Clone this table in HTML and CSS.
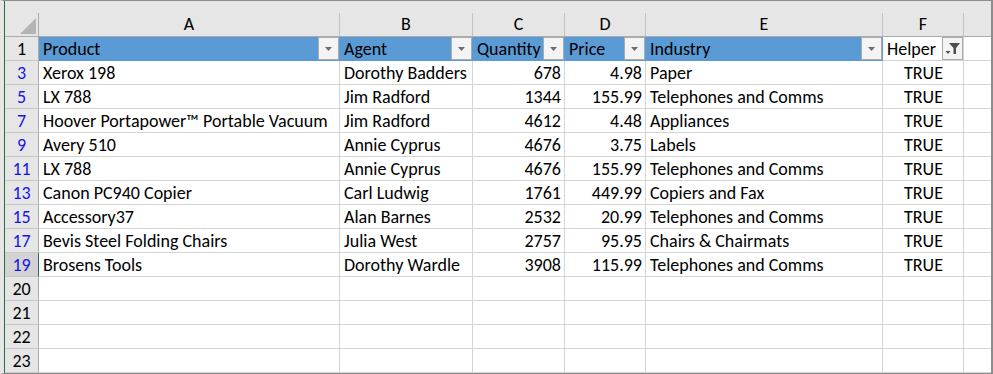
FILE: index.html
```html
<!DOCTYPE html>
<html lang="en">
<head>
    <meta charset="UTF-8">
    <title>Products - filtered</title>
    <link rel="stylesheet" href="styles.css">
</head>
<body>
    <div class="window">
        <div class="sheet">
            <div class="head-strip"></div>
            <div class="grid">
                <!-- column letters -->
                <div class="corner">
                    <svg width="16" height="16" viewBox="0 0 16 16"><polygon points="16,0 16,16 0,16" fill="#b4b4b4"/></svg>
                </div>
                <div class="ch">A</div>
                <div class="ch">B</div>
                <div class="ch">C</div>
                <div class="ch">D</div>
                <div class="ch">E</div>
                <div class="ch">F</div>
                <div class="ch last"></div>

                <!-- table header -->
                <div class="rh">1</div>
                <div class="c th">Product<span class="flt"><svg width="7" height="4"><polygon points="0,0 7,0 3.5,4" fill="#6d6d6d"/></svg></span></div>
                <div class="c th">Agent<span class="flt"><svg width="7" height="4"><polygon points="0,0 7,0 3.5,4" fill="#6d6d6d"/></svg></span></div>
                <div class="c th">Quantity<span class="flt"><svg width="7" height="4"><polygon points="0,0 7,0 3.5,4" fill="#6d6d6d"/></svg></span></div>
                <div class="c th">Price<span class="flt"><svg width="7" height="4"><polygon points="0,0 7,0 3.5,4" fill="#6d6d6d"/></svg></span></div>
                <div class="c th">Industry<span class="flt"><svg width="7" height="4"><polygon points="0,0 7,0 3.5,4" fill="#6d6d6d"/></svg></span></div>
                <div class="c th plain">Helper<span class="flt"><svg width="15" height="13" viewBox="0 0 15 13"><polygon points="4,1 15,1 11,6 11,12 8.5,12 8.5,6" fill="#4d4d4d"/><polygon points="0.5,9 5.5,9 3,12" fill="#4d4d4d"/></svg></span></div>
                <div class="c last"></div>

                <div class="rh hit">3</div>
                <div class="c">Xerox 198</div>
                <div class="c">Dorothy Badders</div>
                <div class="c num">678</div>
                <div class="c num">4.98</div>
                <div class="c">Paper</div>
                <div class="c ctr">TRUE</div>
                <div class="c last"></div>

                <div class="rh hit">5</div>
                <div class="c">LX 788</div>
                <div class="c">Jim Radford</div>
                <div class="c num">1344</div>
                <div class="c num">155.99</div>
                <div class="c">Telephones and Comms</div>
                <div class="c ctr">TRUE</div>
                <div class="c last"></div>

                <div class="rh hit">7</div>
                <div class="c">Hoover Portapower™ Portable Vacuum</div>
                <div class="c">Jim Radford</div>
                <div class="c num">4612</div>
                <div class="c num">4.48</div>
                <div class="c">Appliances</div>
                <div class="c ctr">TRUE</div>
                <div class="c last"></div>

                <div class="rh hit">9</div>
                <div class="c">Avery 510</div>
                <div class="c">Annie Cyprus</div>
                <div class="c num">4676</div>
                <div class="c num">3.75</div>
                <div class="c">Labels</div>
                <div class="c ctr">TRUE</div>
                <div class="c last"></div>

                <div class="rh hit">11</div>
                <div class="c">LX 788</div>
                <div class="c">Annie Cyprus</div>
                <div class="c num">4676</div>
                <div class="c num">155.99</div>
                <div class="c">Telephones and Comms</div>
                <div class="c ctr">TRUE</div>
                <div class="c last"></div>

                <div class="rh hit">13</div>
                <div class="c">Canon PC940 Copier</div>
                <div class="c">Carl Ludwig</div>
                <div class="c num">1761</div>
                <div class="c num">449.99</div>
                <div class="c">Copiers and Fax</div>
                <div class="c ctr">TRUE</div>
                <div class="c last"></div>

                <div class="rh hit">15</div>
                <div class="c">Accessory37</div>
                <div class="c">Alan Barnes</div>
                <div class="c num">2532</div>
                <div class="c num">20.99</div>
                <div class="c">Telephones and Comms</div>
                <div class="c ctr">TRUE</div>
                <div class="c last"></div>

                <div class="rh hit">17</div>
                <div class="c">Bevis Steel Folding Chairs</div>
                <div class="c">Julia West</div>
                <div class="c num">2757</div>
                <div class="c num">95.95</div>
                <div class="c">Chairs &amp; Chairmats</div>
                <div class="c ctr">TRUE</div>
                <div class="c last"></div>

                <div class="rh hit active">19</div>
                <div class="c">Brosens Tools</div>
                <div class="c">Dorothy Wardle</div>
                <div class="c num">3908</div>
                <div class="c num">115.99</div>
                <div class="c">Telephones and Comms</div>
                <div class="c ctr">TRUE</div>
                <div class="c last"></div>

                <div class="rh">20</div>
                <div class="c"></div><div class="c"></div><div class="c"></div><div class="c"></div><div class="c"></div><div class="c"></div><div class="c last"></div>
                <div class="rh">21</div>
                <div class="c"></div><div class="c"></div><div class="c"></div><div class="c"></div><div class="c"></div><div class="c"></div><div class="c last"></div>
                <div class="rh">22</div>
                <div class="c"></div><div class="c"></div><div class="c"></div><div class="c"></div><div class="c"></div><div class="c"></div><div class="c last"></div>
                <div class="rh">23</div>
                <div class="c"></div><div class="c"></div><div class="c"></div><div class="c"></div><div class="c"></div><div class="c"></div><div class="c last"></div>
            </div>
        </div>
    </div>
</body>
</html>
```

FILE: styles.css
```css
html, body {
    margin: 0;
    padding: 0;
    overflow: hidden;
    background-color: #fff;
}
.window {
    width: 993px;
    height: 374px;
    box-sizing: border-box;
    border-top: 1px solid #8c8c8c;
    border-bottom: 1px solid #8c8c8c;
    border-left: 4px solid #e6e6e6;
    border-right: 2px solid #8c8c8c;
    font-family: Carlito, "Liberation Sans", sans-serif;
    font-size: 18px;
    color: #000;
}
.sheet {
    border-left: 1px solid #217346;
    height: 100%;
}
.head-strip {
    height: 12px;
    background-color: #e6e6e6;
}
.grid {
    display: grid;
    grid-template-columns: 34px 301px 133px 92px 81px 237px 81px 27px;
    grid-auto-rows: 24px;
}
.grid > div {
    box-sizing: border-box;
    border-right: 1px solid #d4d4d4;
    border-bottom: 1px solid #d4d4d4;
    line-height: 24px;
    white-space: nowrap;
    overflow: hidden;
}
.grid > .corner {
    background-color: #e6e6e6;
    border-right-color: #ababab;
    border-bottom-color: #ababab;
    display: flex;
    align-items: flex-end;
    justify-content: flex-end;
    padding: 0 2px 2px 0;
}
.corner svg {
    display: block;
}
.grid > .ch {
    background-color: #e6e6e6;
    border-right-color: #c2c2c2;
    border-bottom-color: #ababab;
    text-align: center;
    line-height: 23px;
}
.grid > .ch.last {
    border-right: none;
}
.grid > .rh {
    background-color: #e6e6e6;
    border-right-color: #ababab;
    border-bottom-color: #c8c8c8;
    text-align: center;
}
.grid > .rh.hit {
    color: #1515e8;
}
.grid > .rh.active {
    background-color: #d3d3d3;
    border-right: 1px solid #217346;
}
.grid > .c {
    padding: 0 3px 0 4px;
}
.grid > .c.last {
    border-right: none;
}
.grid > .num {
    text-align: right;
}
.grid > .ctr {
    text-align: center;
}
.grid > .th {
    background-color: #5b9bd5;
    border-right-color: #5b9bd5;
    border-bottom-color: #5b9bd5;
    display: flex;
    justify-content: space-between;
    padding-right: 0;
}
.grid > .th.plain {
    background-color: #fff;
    border-right-color: #d4d4d4;
    border-bottom-color: #d4d4d4;
}
.flt {
    flex: none;
    width: 21px;
    height: 23px;
    box-sizing: border-box;
    border: 1px solid #ababab;
    background-color: #f4f4f4;
    display: flex;
    align-items: center;
    justify-content: center;
}
.flt svg {
    display: block;
}
```
